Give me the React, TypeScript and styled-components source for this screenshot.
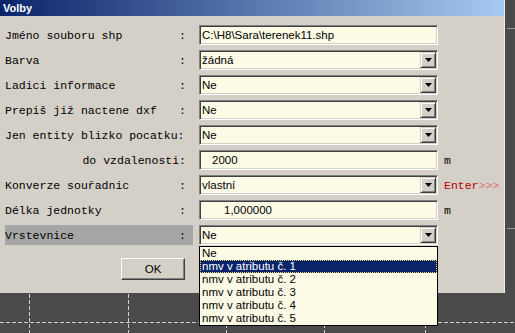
import React from 'react';
import styled, { createGlobalStyle } from 'styled-components';

const GlobalStyle = createGlobalStyle`
  html, body {
    margin: 0;
    padding: 0;
    background: #4a4a4a;
    overflow: hidden;
  }
`;

const LIST_ITEMS = [
  'Ne',
  'nmv v atributu č. 1',
  'nmv v atributu č. 2',
  'nmv v atributu č. 3',
  'nmv v atributu č. 4',
  'nmv v atributu č. 5',
];

// background canvas of the CAD program
function CanvasGrid() {
  const xs = [29, 128, 226, 324, 425];
  return (
    <GridSvg width="515" height="333">
      {xs.map(x => (
        <line key={x} x1={x + 0.5} y1="0" x2={x + 0.5} y2="333" stroke="#cfcfcf" strokeDasharray="4 2" />
      ))}
      <line x1="0" y1="322.5" x2="515" y2="322.5" stroke="#cfcfcf" strokeDasharray="4 2" />
      <line x1="507" y1="228.5" x2="515" y2="228.5" stroke="#9a9a9a" />
      <line x1="507" y1="28.5" x2="515" y2="28.5" stroke="#9a9a9a" />
    </GridSvg>
  );
}

function Arrow() {
  return (
    <ArrowButton>
      <svg width="7" height="4" viewBox="0 0 7 4">
        <path d="M0 0h7L3.5 4z" fill="#000" />
      </svg>
    </ArrowButton>
  );
}

function Select({ value, children }: { value: string; children?: React.ReactNode }) {
  return (
    <Field>
      <FieldText>{value}</FieldText>
      <Arrow />
      {children}
    </Field>
  );
}

// COMPONENT
export default function App() {
  return (
    <Screen>
      <GlobalStyle />
      <CanvasGrid />
      <Dialog>
        <TitleBar>Volby</TitleBar>
        <Body>
          <Row>
            <Label><span>Jméno souboru shp</span><span>:</span></Label>
            <Field><FieldText>C:\H8\Sara\terenek11.shp</FieldText></Field>
          </Row>
          <Row>
            <Label><span>Barva</span><span>:</span></Label>
            <Select value="žádná" />
          </Row>
          <Row>
            <Label><span>Ladici informace</span><span>:</span></Label>
            <Select value="Ne" />
          </Row>
          <Row>
            <Label><span>Prepiš již nactene dxf</span><span>:</span></Label>
            <Select value="Ne" />
          </Row>
          <Row>
            <Label><span>Jen entity blizko pocatku:</span></Label>
            <Select value="Ne" />
          </Row>
          <Row>
            <Label $right><span>do vzdalenosti:</span></Label>
            <Field><FieldText $indent={10}>2000</FieldText></Field>
            <Unit>m</Unit>
          </Row>
          <Row>
            <Label><span>Konverze souřadnic</span><span>:</span></Label>
            <Select value="vlastní" />
            <Unit><EnterWord>Enter</EnterWord><EnterArrows>&gt;&gt;&gt;</EnterArrows></Unit>
          </Row>
          <Row>
            <Label><span>Délka jednotky</span><span>:</span></Label>
            <Field><FieldText $indent={22}>1,000000</FieldText></Field>
            <Unit>m</Unit>
          </Row>
          <Row>
            <Label $active><span>Vrstevnice</span><span>:</span></Label>
            <Select value="Ne">
              <DropList>
                {LIST_ITEMS.map((item, i) => (
                  <ListItem key={item} $selected={i === 1}>{item}</ListItem>
                ))}
              </DropList>
            </Select>
          </Row>
          <Footer>
            <OkButton>OK</OkButton>
          </Footer>
        </Body>
      </Dialog>
    </Screen>
  );
}

// STYLING
const Screen = styled.div`
  position: relative;
  width: 515px;
  height: 333px;
  background: #4a4a4a;
`;
const GridSvg = styled.svg`
  position: absolute;
  top: 0;
  left: 0;
`;
const Dialog = styled.div`
  position: relative;
  width: 505px;
  height: 293px;
  background: #d4d0c8;
  border-right: 1px solid #ecebe6;
  box-sizing: border-box;
  display: flex;
  flex-direction: column;
`;
const TitleBar = styled.div`
  height: 16px;
  padding-left: 3px;
  background: linear-gradient(to right, #0a246a, #a6caf0);
  color: #fff;
  font: bold 11px "Liberation Sans", Arial, sans-serif;
  line-height: 16px;
`;
const Body = styled.div`
  display: flex;
  flex-direction: column;
  gap: 5px;
  padding: 9px 0 0 5px;
`;
const Row = styled.div`
  display: grid;
  grid-template-columns: 194px 239px auto;
  height: 20px;
  align-items: center;
`;
const Label = styled.div<{ $right?: boolean; $active?: boolean }>`
  width: 188px;
  height: 20px;
  box-sizing: border-box;
  padding-right: 7px;
  display: flex;
  align-items: center;
  justify-content: ${p => (p.$right ? 'flex-end' : 'space-between')};
  background: ${p => (p.$active ? '#a6a6a6' : 'transparent')};
  color: #000;
  font: 11.5px "Courier New", "Liberation Mono", monospace;
  white-space: pre;
`;
const Field = styled.div`
  position: relative;
  height: 20px;
  box-sizing: border-box;
  display: flex;
  align-items: center;
  background: #fdfbe6;
  border: 1px solid;
  border-color: #808080 #ffffff #ffffff #808080;
  box-shadow: inset 1px 1px 0 #404040, inset -1px -1px 0 #d4d0c8;
`;
const FieldText = styled.span<{ $indent?: number }>`
  flex: 1;
  padding-left: ${p => 2 + (p.$indent || 0)}px;
  font: 11.5px "Liberation Sans", Arial, sans-serif;
  color: #000;
  white-space: nowrap;
`;
const ArrowButton = styled.div`
  width: 16px;
  height: 16px;
  margin-right: 1px;
  box-sizing: border-box;
  display: flex;
  align-items: center;
  justify-content: center;
  background: #d4d0c8;
  border: 1px solid;
  border-color: #d4d0c8 #404040 #404040 #d4d0c8;
  box-shadow: inset 1px 1px 0 #ffffff, inset -1px -1px 0 #808080;
`;
const Unit = styled.div`
  padding-left: 6px;
  font: 11.5px "Courier New", "Liberation Mono", monospace;
  color: #000;
`;
const EnterWord = styled.span`
  color: #b40000;
`;
const EnterArrows = styled.span`
  color: #e07070;
`;
const Footer = styled.div`
  display: flex;
  padding: 8px 0 0 116px;
`;
const OkButton = styled.div`
  width: 64px;
  height: 22px;
  box-sizing: border-box;
  display: flex;
  align-items: center;
  justify-content: center;
  background: #d4d0c8;
  border: 1px solid;
  border-color: #ffffff #404040 #404040 #ffffff;
  box-shadow: inset -1px -1px 0 #808080;
  font: 11.5px "Liberation Sans", Arial, sans-serif;
  color: #000;
`;
const DropList = styled.div`
  position: absolute;
  top: 20px;
  left: -1px;
  width: 239px;
  box-sizing: border-box;
  border: 1px solid #000;
  background: #fdfbe6;
  z-index: 5;
`;
const ListItem = styled.div<{ $selected?: boolean }>`
  height: 13px;
  line-height: 13px;
  padding-left: 2px;
  box-sizing: border-box;
  font: 11.5px/13px "Liberation Sans", Arial, sans-serif;
  color: ${p => (p.$selected ? '#fff' : '#000')};
  background: ${p => (p.$selected ? '#0a246a' : 'transparent')};
  outline: ${p => (p.$selected ? '1px dotted #e8e070' : 'none')};
  outline-offset: -1px;
  white-space: nowrap;
`;
